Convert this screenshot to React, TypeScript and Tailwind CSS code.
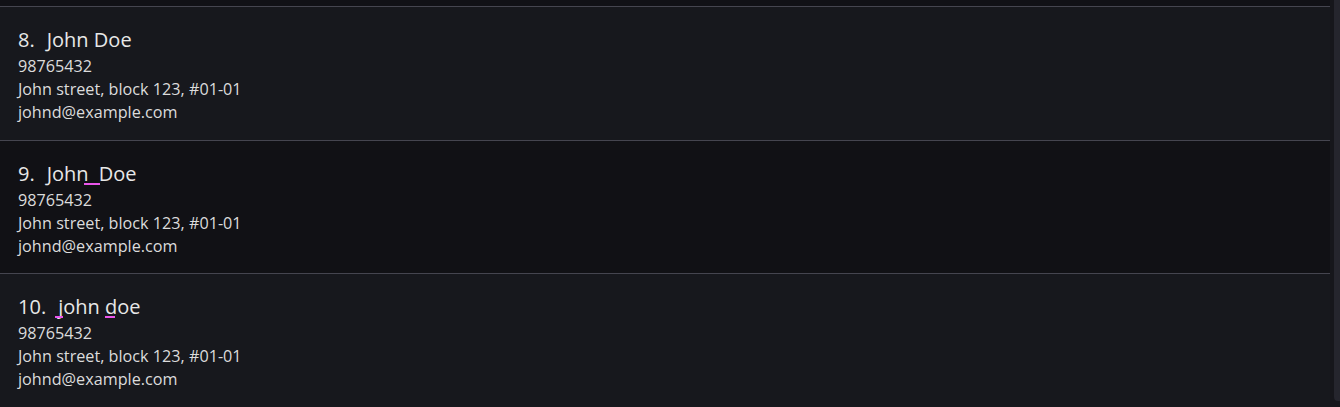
import React from "react";

type Person = {
  idx: number;
  name: React.ReactNode;
  phone: string;
  address: string;
  email: string;
};

const people: Person[] = [
  {
    idx: 8,
    name: "John Doe",
    phone: "98765432",
    address: "John street, block 123, #01-01",
    email: "johnd@example.com",
  },
  {
    idx: 9,
    name: (
      <>
        John
        <span className="relative inline-block w-[10px]">
          &nbsp;
          <span className="absolute -left-[5px] -right-[1px] bottom-[2px] h-[2px] bg-[#ea55ea]" />
        </span>
        Doe
      </>
    ),
    phone: "98765432",
    address: "John street, block 123, #01-01",
    email: "johnd@example.com",
  },
  {
    idx: 10,
    name: (
      <>
        <span className="relative">
          j
          <span className="absolute -left-[3px] right-0 bottom-[2px] h-[2px] bg-[#ea55ea]" />
        </span>
        ohn{" "}
        <span className="relative">
          d
          <span className="absolute left-0 right-[2px] bottom-[2px] h-[2px] bg-[#ea55ea]" />
        </span>
        oe
      </>
    ),
    phone: "98765432",
    address: "John street, block 123, #01-01",
    email: "johnd@example.com",
  },
];

function PersonCard({ p, dark, height }: { p: Person; dark: boolean; height: string }) {
  return (
    <div
      className={`border-t border-[#45454f] pl-[18px] pt-[20px] ${height} ${
        dark ? "bg-[#111115]" : "bg-[#17181d]"
      }`}
    >
      <div className="mb-[2px] flex items-baseline text-[20px] leading-[26px] text-[#e8e8e8]">
        <span>{p.idx}.</span>
        <span className="ml-[12px]">{p.name}</span>
      </div>
      <div className="text-[16.2px] leading-[23px] text-[#dcdcdc]">
        <div>{p.phone}</div>
        <div>{p.address}</div>
        <div>{p.email}</div>
      </div>
    </div>
  );
}

export default function App() {
  return (
    <div
      className="flex h-[407px] w-[1340px] overflow-hidden bg-[#111116]"
      style={{ fontFamily: '"Open Sans", "Noto Sans", sans-serif' }}
    >
      <div className="flex w-[1330px] flex-col">
        <div className="h-[6px] bg-[#111116]" />
        <PersonCard p={people[0]} dark={false} height="h-[134px]" />
        <PersonCard p={people[1]} dark={true} height="h-[133px]" />
        <PersonCard p={people[2]} dark={false} height="flex-1" />
      </div>
      <div className="flex w-[10px] bg-[#16161b] pl-[4px]">
        <div className="mb-[6px] w-[6px] rounded-bl-[4px] bg-[#25252d]" />
      </div>
    </div>
  );
}
